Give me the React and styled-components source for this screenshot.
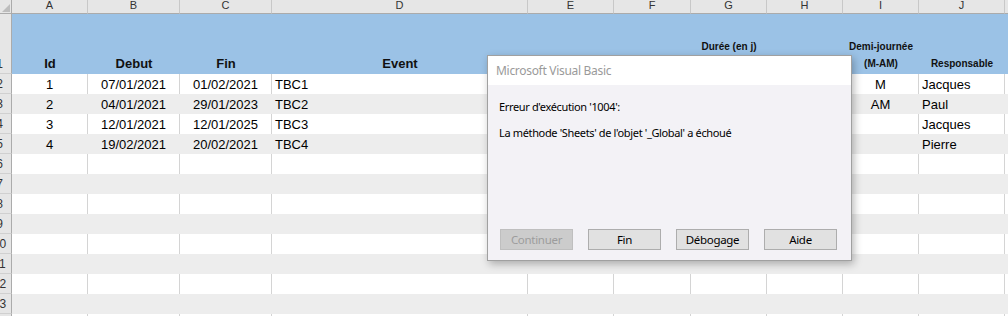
import styled, { createGlobalStyle } from "styled-components"

const Global = createGlobalStyle`
    html, body {
        margin: 0;
        padding: 0;
        background: #ffffff;
        overflow: hidden;
    }
    body {
        font-family: "Liberation Sans", Arial, sans-serif;
    }
`

const Page = styled.div`
    position: relative;
    width: 1008px;
    height: 316px;
    overflow: hidden;
`

const Sheet = styled.div`
    display: grid;
    grid-template-columns: 12px 76px 92px 92px 256px 86px 77px 76px 76px 76px 86px 1fr;
    grid-template-rows: 14px 60px repeat(13, 20px);
`

const Corner = styled.div`
    background: #e6e6e6;
    border-right: 1px solid #ababab;
    border-bottom: 1px solid #ababab;
    box-sizing: border-box;
    position: relative;
    overflow: hidden;

    &::after {
        content: "";
        position: absolute;
        right: 1px;
        bottom: 1px;
        border-left: 8px solid transparent;
        border-bottom: 8px solid #bdbdbd;
    }
`

const ColHead = styled.div`
    background: #e6e6e6;
    border-right: 1px solid #c8c8c8;
    border-bottom: 1px solid #ababab;
    box-sizing: border-box;
    overflow: hidden;
    text-align: center;
    font-size: 11px;
    line-height: 10px;
    color: #333;
`

const RowHead = styled.div`
    background: #e6e6e6;
    border-right: 1px solid #ababab;
    border-bottom: 1px solid #d0d0d0;
    box-sizing: border-box;
    overflow: hidden;
    display: flex;
    align-items: ${p => (p.$bottom ? "flex-end" : "center")};
    padding-bottom: ${p => (p.$bottom ? "2px" : "0")};
    font-size: 12px;
    color: #333;

    span {
        display: block;
        width: 25px;
        margin-left: -13px;
        flex-shrink: 0;
        text-align: center;
    }
`

const HeadCell = styled.div`
    background: #9bc2e6;
    box-sizing: border-box;
    display: flex;
    flex-direction: column;
    justify-content: flex-end;
    align-items: center;
    text-align: center;
    font-weight: bold;
    font-size: ${p => (p.$small ? "10px" : "13px")};
    line-height: ${p => (p.$small ? "17px" : "16px")};
    padding-bottom: ${p => (p.$raise ? "19px" : "2px")};
    white-space: nowrap;
    color: #111;
`

const Cell = styled.div`
    background: ${p => (p.$band ? "#ededed" : "#ffffff")};
    border-right: 1px solid ${p => (p.$band ? "#ededed" : "#d4d4d4")};
    box-sizing: border-box;
    display: flex;
    align-items: center;
    justify-content: ${p => (p.$align === "center" ? "center" : "flex-start")};
    padding-left: ${p => (p.$align === "center" ? "0" : "3px")};
    font-size: 13px;
    color: #000;
    white-space: nowrap;
    overflow: hidden;
`

const Dialog = styled.div`
    position: absolute;
    left: 487px;
    top: 55px;
    width: 365px;
    height: 206px;
    box-sizing: border-box;
    border: 1px solid #a0a0a0;
    background: #f3f2f6;
    box-shadow: 2px 3px 8px rgba(0, 0, 0, 0.28);
    display: flex;
    flex-direction: column;
    font-family: "Noto Sans", "Open Sans", sans-serif;
`

const TitleBar = styled.div`
    height: 29px;
    background: #ffffff;
    display: flex;
    align-items: center;
    padding-left: 8px;
    font-size: 12px;
    letter-spacing: -0.3px;
    color: #9a9a9a;
`

const Body = styled.div`
    flex: 1;
    display: flex;
    flex-direction: column;
    padding: 14px 14px 10px 11px;
`

const Message = styled.p`
    margin: 0 0 10px 0;
    font-size: 11px;
    line-height: 16px;
    letter-spacing: -0.35px;
    color: #000;
`

const Buttons = styled.div`
    margin-top: auto;
    display: flex;
    justify-content: space-between;
    padding-left: 1px;
`

const Button = styled.div`
    width: 73px;
    height: 21px;
    box-sizing: border-box;
    border: 1px solid ${p => (p.$disabled ? "#bfbfbf" : "#adadad")};
    background: ${p => (p.$disabled ? "#cccccc" : "#e1e1e1")};
    color: ${p => (p.$disabled ? "#9c9c9c" : "#000")};
    display: flex;
    align-items: center;
    justify-content: center;
    font-size: 11.5px;
    letter-spacing: -0.3px;
`

const colonnes = ["A", "B", "C", "D", "E", "F", "G", "H", "I", "J", ""]

const lignes = [
    { id: "1", debut: "07/01/2021", fin: "01/02/2021", event: "TBC1", demi: "M", resp: "Jacques" },
    { id: "2", debut: "04/01/2021", fin: "29/01/2023", event: "TBC2", demi: "AM", resp: "Paul" },
    { id: "3", debut: "12/01/2021", fin: "12/01/2025", event: "TBC3", demi: "", resp: "Jacques" },
    { id: "4", debut: "19/02/2021", fin: "20/02/2021", event: "TBC4", demi: "", resp: "Pierre" },
]

const vides = Array.from({ length: 9 }, () => ({ id: "", debut: "", fin: "", event: "", demi: "", resp: "" }))

const Ligne = ({ num, data, band }) => (
    <>
        <RowHead><span>{num}</span></RowHead>
        <Cell $band={band} $align="center">{data.id}</Cell>
        <Cell $band={band} $align="center">{data.debut}</Cell>
        <Cell $band={band} $align="center">{data.fin}</Cell>
        <Cell $band={band}>{data.event}</Cell>
        <Cell $band={band} />
        <Cell $band={band} />
        <Cell $band={band} />
        <Cell $band={band} />
        <Cell $band={band} $align="center">{data.demi}</Cell>
        <Cell $band={band}>{data.resp}</Cell>
        <Cell $band={band} />
    </>
)

const App = () => {
    const toutes = [...lignes, ...vides]
    return (
        <Page>
            <Global />
            <Sheet>
                <Corner />
                {colonnes.map((c, i) => (
                    <ColHead key={i}>{c}</ColHead>
                ))}

                <RowHead $bottom><span>1</span></RowHead>
                <HeadCell>Id</HeadCell>
                <HeadCell>Debut</HeadCell>
                <HeadCell>Fin</HeadCell>
                <HeadCell>Event</HeadCell>
                <HeadCell />
                <HeadCell />
                <HeadCell $small $raise>Durée (en j)</HeadCell>
                <HeadCell />
                <HeadCell $small>
                    <div>Demi-journée</div>
                    <div>(M-AM)</div>
                </HeadCell>
                <HeadCell $small>Responsable</HeadCell>
                <HeadCell />

                {toutes.map((l, i) => (
                    <Ligne key={i} num={i + 2} data={l} band={i % 2 === 1} />
                ))}
            </Sheet>

            <Dialog>
                <TitleBar>Microsoft Visual Basic</TitleBar>
                <Body>
                    <Message>Erreur d'exécution '1004':</Message>
                    <Message>La méthode 'Sheets' de l'objet '_Global' a échoué</Message>
                    <Buttons>
                        <Button $disabled>Continuer</Button>
                        <Button>Fin</Button>
                        <Button>Débogage</Button>
                        <Button>Aide</Button>
                    </Buttons>
                </Body>
            </Dialog>
        </Page>
    )
}

export default App
